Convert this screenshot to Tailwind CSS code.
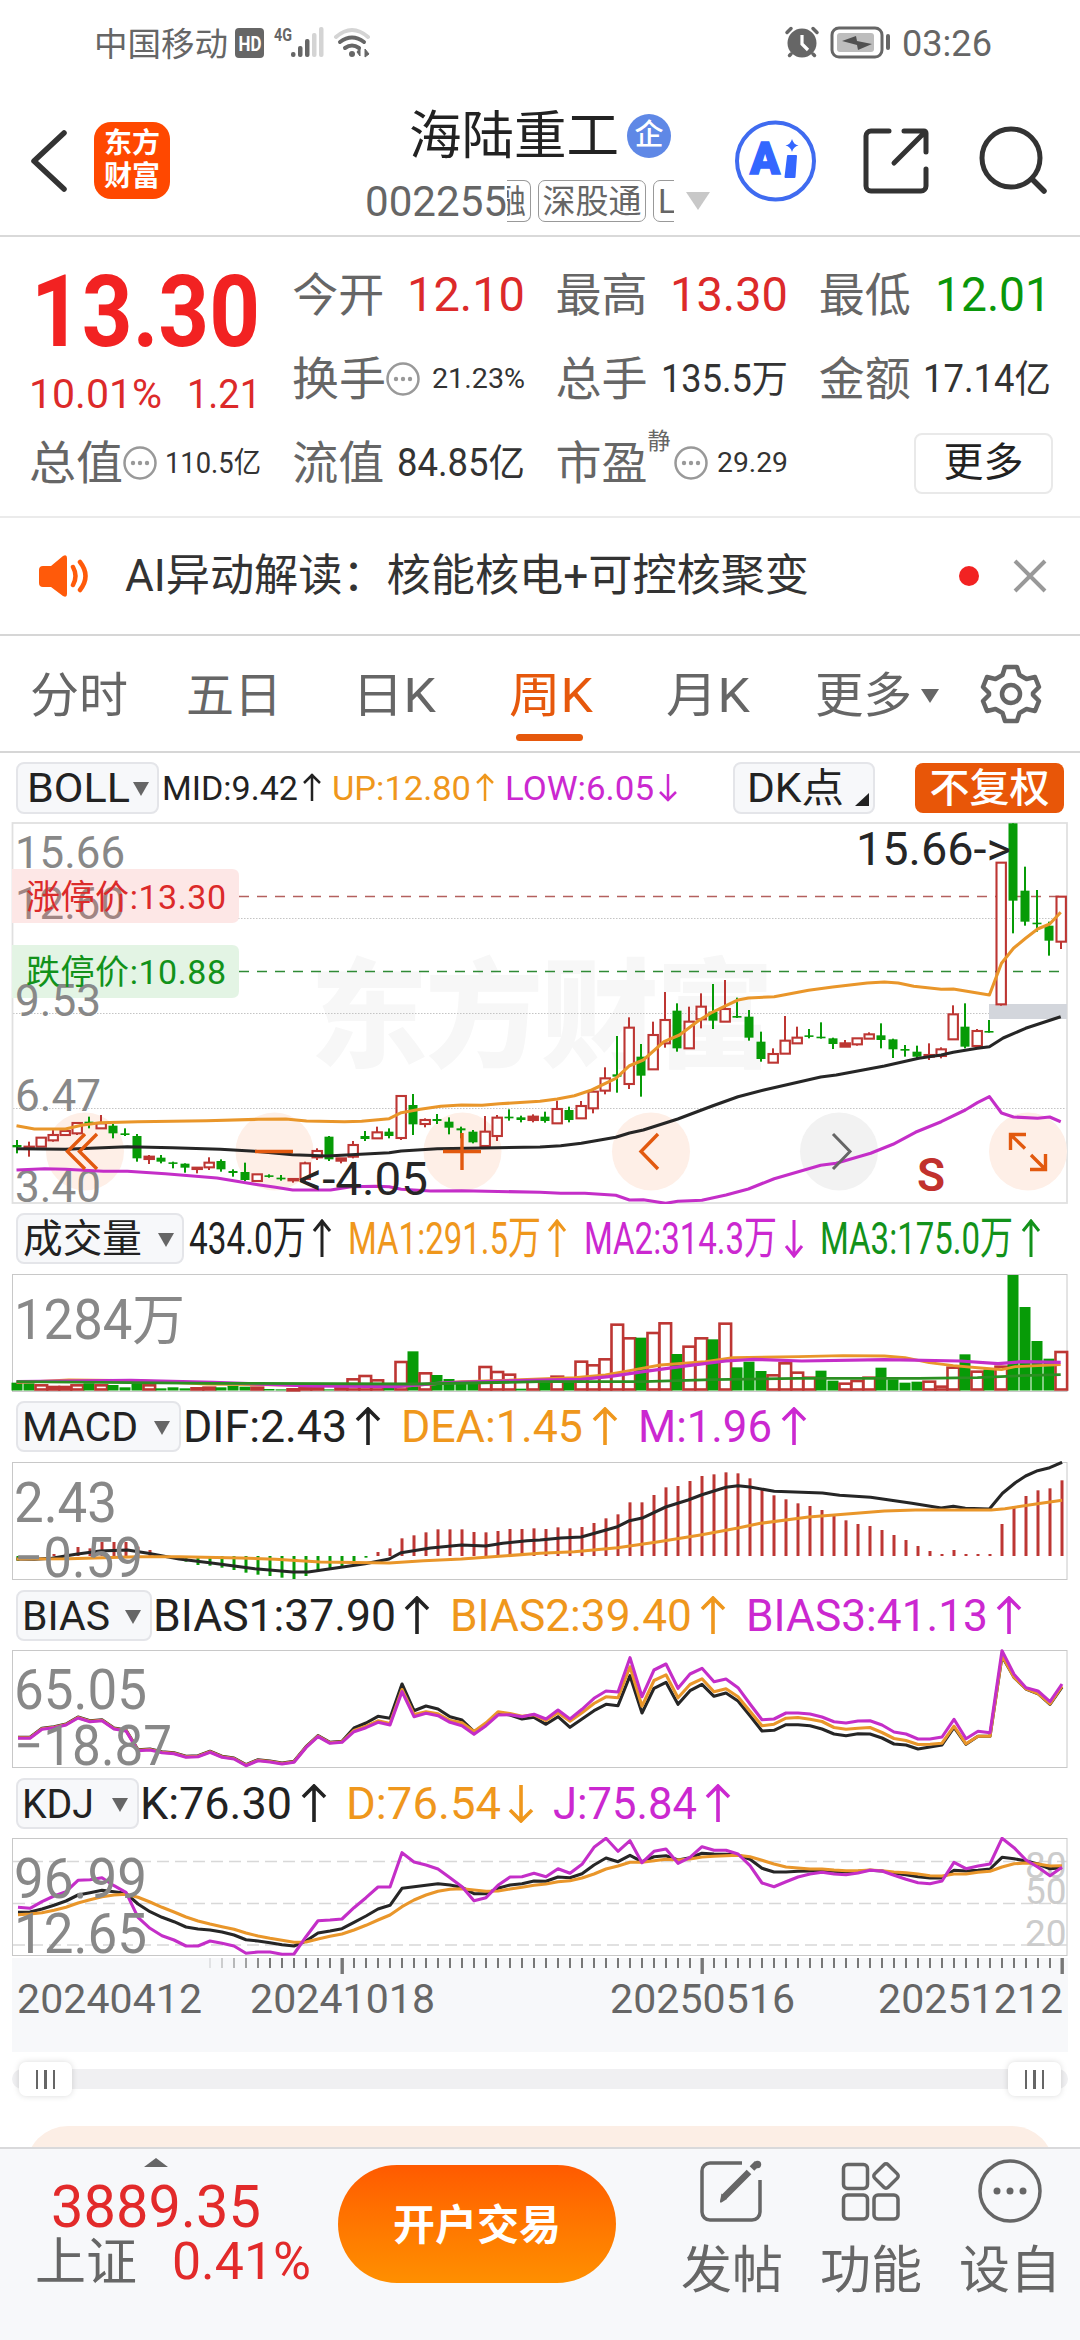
<!DOCTYPE html>
<html lang="zh-CN">
<head>
<meta charset="utf-8">
<title>海陆重工 002255</title>
<script src="https://cdn.jsdelivr.net/npm/@tailwindcss/browser@4"></script>
</head>
<body class="bg-white">
<div class="flex h-[2340px] w-[1080px] flex-col overflow-hidden bg-white font-[Roboto,'Noto_Sans_CJK_SC',sans-serif] leading-none whitespace-nowrap text-[#666]">

  <!-- status bar -->
  <div class="flex h-[88px] shrink-0 items-center pl-[94px] pr-[88px]">
    <span class="fit w-[134px] text-[33px]">中国移动</span>
    <svg class="ml-[6px]" width="140" height="36" viewBox="234 26 140 36">
      <rect x="235" y="28" width="29" height="30" rx="4" fill="#666"/>
      <text x="238.500" y="51" font-size="21" font-weight="700" fill="#fff" textLength="23" lengthAdjust="spacingAndGlyphs">HD</text>
      <text x="274" y="41" font-size="18" font-weight="700" fill="#666" textLength="18" lengthAdjust="spacingAndGlyphs">4G</text>
      <g fill="#666"><rect x="291" y="52" width="4.500" height="5" rx="2"/><rect x="298" y="46" width="4.500" height="11" rx="2"/><rect x="305" y="39" width="4.500" height="18" rx="2"/></g>
      <g fill="#d4d4d4"><rect x="312" y="33" width="4.500" height="24" rx="2"/><rect x="319" y="27" width="4.500" height="30" rx="2"/></g>
      <g fill="none" stroke-width="4" stroke-linecap="round"><path d="M336 37q16-14 32 0" stroke="#d4d4d4"/><path d="M340 42q12-9 24 0M345 48q7-5 14 0" stroke="#666"/></g>
      <circle cx="352" cy="54" r="3" fill="#666"/>
      <path d="M360 48v8l-3-4zM365 57v-8l4 5z" fill="#666" stroke="#666"/>
    </svg>
    <svg class="ml-auto" width="108" height="36" viewBox="784 26 108 36">
      <circle cx="802" cy="43" r="14.500" fill="#666"/>
      <path d="M787 32.500l4-4M817 32.500l-4-4M791 54l-1.500 1.500M813 54l1.500 1.500" stroke="#666" stroke-width="3.500" stroke-linecap="round"/>
      <path d="M802 35v9l6 6" stroke="#fff" stroke-width="3.200" fill="none"/>
      <rect x="832" y="28" width="50" height="29" rx="7" fill="none" stroke="#666" stroke-width="3"/>
      <rect x="837" y="33" width="37" height="19" rx="3" fill="#bdbdbd"/>
      <path d="M856 36l1 5 15 3-14 6-1-5-15-4z" fill="#505050"/>
      <rect x="886" y="34" width="4" height="16" rx="2" fill="#666"/>
    </svg>
    <span class="fit ml-[10px] w-[90px] text-[36px]">03:26</span>
  </div>

  <!-- title bar -->
  <div class="flex h-[149px] shrink-0 border-b-2 border-[#d9d9d9] pl-[28px]">
    <svg class="mt-[41px]" width="42" height="64" viewBox="28 129 42 64"><path d="M64 133L34 161l30 28" fill="none" stroke="#333" stroke-width="5.500" stroke-linecap="round" stroke-linejoin="round"/></svg>
    <div class="mt-[34px] ml-[24px] flex h-[77px] w-[76px] flex-col items-center justify-center gap-[5px] rounded-[17px] bg-[#ff4800] text-[28px] font-bold text-white">
      <span>东方</span><span>财富</span>
    </div>
    <div class="ml-[195px] flex w-[350px] flex-col">
      <div class="mt-[23px] ml-[44px] flex items-center">
        <span class="fit w-[210px] text-[52px] text-[#222]">海陆重工</span>
        <span class="-mt-[3px] ml-[8px] flex size-[44px] items-center justify-center rounded-full bg-[#5f88e6] text-[29px] font-medium text-white">企</span>
      </div>
      <div class="mt-[17px] flex h-[42px] items-center">
        <span class="fit w-[142px] text-[43px]">002255</span>
        <div class="flex h-[42px] w-[167px] gap-[7px] overflow-hidden text-[33px]">
          <span class="flex w-[24px] shrink-0 items-center justify-end rounded-r-[7px] border border-l-0 border-[#999] pr-[4px]">融</span>
          <span class="flex w-[108px] shrink-0 items-center justify-center rounded-[7px] border border-[#999]">深股通</span>
          <span class="flex w-[60px] shrink-0 items-center rounded-[7px] border border-[#999] pl-[4px]">L</span>
        </div>
        <svg class="ml-[12px]" width="24" height="18"><path d="M0 0h24l-12 18z" fill="#c8c8c8"/></svg>
      </div>
    </div>
    <svg class="mt-[30px] ml-[18px]" width="314" height="86" viewBox="733 118 314 86">
      <circle cx="775.500" cy="161" r="38.500" fill="none" stroke="#3f6bf0" stroke-width="4"/>
      <text x="750" y="174" font-size="44" font-weight="900" fill="#3366ff" stroke="#3366ff" stroke-width="1.500" textLength="30" lengthAdjust="spacingAndGlyphs">A</text>
      <path d="M788 156h8l-1.500 21h-9z" fill="#3366ff" stroke="#3366ff" stroke-width="2" stroke-linejoin="round"/><path d="M792 139q1.500 5.500 6.500 6.500-5 1-6.500 6.500-1.500-5.500-6.500-6.500 5-1 6.500-6.500z" fill="#3366ff"/>
      <path d="M889 131h-18a5 5 0 0 0-5 5v50a5 5 0 0 0 5 5h50a5 5 0 0 0 5-5v-17M904 131h20a2 2 0 0 1 2 2v19M924 133L894 163" fill="none" stroke="#333" stroke-width="5" stroke-linecap="round"/>
      <circle cx="1011" cy="158" r="29" fill="none" stroke="#333" stroke-width="5"/><path d="M1032 179l12 12" stroke="#333" stroke-width="5.500" stroke-linecap="round"/>
    </svg>
  </div>

  <!-- quote -->
  <div class="grid h-[281px] shrink-0 grid-cols-4 grid-rows-[84px_84px_84px] gap-x-[31px] border-b-2 border-[#ebebeb] px-[29px] pt-[16px] text-[46px]">
    <div class="row-span-2 flex flex-col text-[#dc2a2a]">
      <span class="fit mt-[9px] ml-[2px] w-[229px] text-[100px] font-bold text-[#f22222]">13.30</span>
      <div class="mt-[12px] flex justify-between text-[41px]"><span class="fit w-[133px]">10.01%</span><span class="fit w-[74px]">1.21</span></div>
    </div>
    <div class="flex items-center justify-between"><span class="fit w-[92px]">今开</span><span class="fit w-[118px] text-[48px] text-[#dc2a2a]">12.10</span></div>
    <div class="flex items-center justify-between"><span class="fit w-[92px]">最高</span><span class="fit w-[118px] text-[48px] text-[#dc2a2a]">13.30</span></div>
    <div class="flex items-center justify-between"><span class="fit w-[92px]">最低</span><span class="fit w-[116px] text-[48px] text-[#0a970a]">12.01</span></div>
    <div class="flex items-center"><span class="fit w-[94px]">换手</span><svg width="34" height="34"><use href="#more"/></svg><span class="fit ml-auto w-[93px] text-[28px] text-[#333]">21.23%</span></div>
    <div class="flex items-center justify-between"><span class="fit w-[92px]">总手</span><span class="fit w-[127px] text-[38px] text-[#333]">135.5万</span></div>
    <div class="flex items-center justify-between"><span class="fit w-[92px]">金额</span><span class="fit w-[128px] text-[38px] text-[#333]">17.14亿</span></div>
    <div class="flex items-center"><span class="fit w-[94px]">总值</span><svg width="34" height="34"><use href="#more"/></svg><span class="fit ml-auto w-[96px] text-[29px] text-[#333]">110.5亿</span></div>
    <div class="flex items-center justify-between"><span class="fit w-[92px]">流值</span><span class="fit w-[128px] text-[38px] text-[#333]">84.85亿</span></div>
    <div class="flex items-center"><span class="fit w-[92px]">市盈</span><span class="-mt-[44px] text-[23px]">静</span><svg class="ml-[3px]" width="34" height="34"><use href="#more"/></svg><span class="fit ml-auto w-[71px] text-[28px] text-[#333]">29.29</span></div>
    <div class="-mr-[2px] flex items-center justify-end"><span class="flex h-[61px] w-[139px] items-center justify-center rounded-[8px] border-2 border-[#e9e9e9] text-[40px] text-[#222]">更多</span></div>
  </div>

  <!-- notice -->
  <div class="flex h-[118px] shrink-0 items-center border-b-2 border-[#d6d6d6] pl-[38px] pr-[32px]">
    <svg width="52" height="44" viewBox="38 554 52 44">
      <path d="M43 566h8l12-10q4-2 4 2v36q0 4-4 2l-12-9h-8q-4 0-4-4v-13q0-4 4-4z" fill="#ff5a0a"/>
      <path d="M73 567q5 9 0 18M80 562q11 14 0 28" fill="none" stroke="#ff5a0a" stroke-width="4.500" stroke-linecap="round"/>
    </svg>
    <span class="fit ml-[35px] w-[684px] text-[44px] text-[#333]">AI异动解读：核能核电+可控核聚变</span>
    <i class="ml-auto size-[20px] rounded-full bg-[#f22222]"></i>
    <svg class="ml-[33px]" width="36" height="36"><path d="M3 3l30 30M33 3L3 33" stroke="#999" stroke-width="4"/></svg>
  </div>

  <!-- period tabs -->
  <div class="flex h-[117px] shrink-0 items-center border-b-2 border-[#d6d6d6] pt-[4px] pl-[30px] text-[48px]">
    <span class="fit w-[98px]">分时</span>
    <span class="fit ml-[58px] w-[96px]">五日</span>
    <span class="fit ml-[70px] w-[84px]">日K</span>
    <span class="relative ml-[73px] text-[#e6580c]"><span class="fit w-[84px]">周K</span><i class="absolute top-[62px] left-[7px] h-[7px] w-[67px] rounded-full bg-[#e6580c]"></i></span>
    <span class="fit ml-[73px] w-[84px]">月K</span>
    <span class="fit ml-[65px] w-[97px]">更多</span>
    <svg class="ml-[9px]" width="18" height="14"><path d="M0 0h18l-9 14z" fill="#666"/></svg>
    <svg class="-mt-[4px] ml-[41px]" width="62" height="62" viewBox="-31 -31 62 62" fill="none" stroke="#666" stroke-width="4.500" stroke-linejoin="round">
      <path d="M-6-27h12l2.500 8 7 4 8.500-2 4 10-6 6v2l6 6-4 10-8.500-2-7 4-2.500 8h-12l-2.500-8-7-4-8.500 2-4-10 6-6v-2l-6-6 4-10 8.500 2 7-4z"/><circle r="9"/>
    </svg>
  </div>

  <!-- BOLL legend -->
  <div class="flex h-[69px] shrink-0 items-center pl-[16px] text-[34px] text-[#222]">
    <div class="flex h-[52px] w-[143px] items-center rounded-[8px] border-2 border-[#e4e5e9] bg-[#f7f8fa] pt-[2px] pl-[9px] text-[41px]"><span class="fit w-[103px]">BOLL</span><svg class="ml-[3px]" width="16" height="14"><path d="M0 0h16l-8 14z" fill="#666"/></svg></div>
    <span class="fit ml-[3px] w-[136px]">MID:9.42</span><svg class="ml-[4px]" width="20" height="30"><use href="#up"/></svg>
    <span class="fit ml-[10px] w-[139px] text-[#ef971c]">UP:12.80</span><svg class="ml-[4px] text-[#ef971c]" width="20" height="30"><use href="#up"/></svg>
    <span class="fit ml-[10px] w-[149px] text-[#cb28d0]">LOW:6.05</span><svg class="ml-[4px] text-[#cb28d0]" width="20" height="30"><use href="#down"/></svg>
    <div class="ml-auto flex h-[52px] w-[142px] items-center rounded-[8px] border-2 border-[#e4e5e9] bg-[#f7f8fa] pt-[2px] pl-[12px] text-[40px]"><span class="fit w-[97px]">DK点</span><svg class="mt-[22px] ml-[11px]" width="14" height="13"><path d="M14 0v13h-14z" fill="#222"/></svg></div>
    <div class="mr-[16px] ml-[40px] flex h-[50px] w-[149px] items-center justify-center rounded-[8px] bg-[#e85608] pt-[2px] text-[40px] font-medium text-white">不复权</div>
  </div>

  <!-- candles -->
  <svg id="kline" class="shrink-0" width="1080" height="382" viewBox="0 822 1080 382">
    <text x="310" y="1058" font-size="118" font-weight="900" fill="#f7f7f7" textLength="464">东方财富</text>
    <g stroke="#c4c4c4" stroke-width="1.200" stroke-dasharray="1.500 1.500"><path d="M13 918.500H1067M13 1013.500H1067M13 1108.500H1067"/></g>
    <rect x="12.500" y="823" width="1054.500" height="380" fill="none" stroke="#e0e0e0" stroke-width="1.800"/>
    <g fill="#feefe7"><circle cx="85" cy="1151.500" r="39"/><circle cx="274.500" cy="1151.500" r="39"/><circle cx="462.500" cy="1151.500" r="39"/><circle cx="651" cy="1151.500" r="39"/><circle cx="1028" cy="1151.500" r="39"/></g>
    <circle cx="839" cy="1151.500" r="39" fill="#f2f2f2"/>
    <rect x="989" y="1004" width="78" height="15" fill="#d3d6dc"/>
    <path d="M12 869h220q7 0 7 7v40q0 7-7 7H12z" fill="#fde7e6"/>
    <path d="M12 945h220q7 0 7 7v39q0 7-7 7H12z" fill="#e3f4e4"/>
    <path d="M239 896.500H1067" stroke="#b4605e" stroke-width="1.400" stroke-dasharray="10 8"/>
    <path d="M239 971.500H1067" stroke="#2f8a35" stroke-width="1.400" stroke-dasharray="10 8"/>
    <g font-size="45" fill="#888">
      <text x="15" y="868" textLength="110" lengthAdjust="spacingAndGlyphs">15.66</text><text x="15" y="919" textLength="110" lengthAdjust="spacingAndGlyphs" fill="#a08583">12.60</text>
      <text x="15" y="1015.500" textLength="86" lengthAdjust="spacingAndGlyphs">9.53</text><text x="15" y="1110.500" textLength="86" lengthAdjust="spacingAndGlyphs">6.47</text><text x="15" y="1201.500" textLength="86" lengthAdjust="spacingAndGlyphs">3.40</text>
    </g>
    <text x="26" y="909" font-size="34" fill="#dc2a2a" textLength="200">涨停价:13.30</text>
    <text x="26" y="984" font-size="34" fill="#12921a" textLength="200">跌停价:10.88</text>
  </svg>

  <!-- volume legend -->
  <div class="flex h-[69px] shrink-0 items-center pl-[16px] text-[45px] text-[#222]">
    <div class="flex h-[51px] w-[168px] items-center rounded-[8px] border-2 border-[#e4e5e9] bg-[#f7f8fa] pt-[2px] pl-[5px] text-[39px]"><span class="fit w-[119px]">成交量</span><svg class="ml-[16px]" width="16" height="14"><path d="M0 0h16l-8 14z" fill="#666"/></svg></div>
    <span class="fit ml-[5px] w-[117px]">434.0万</span><svg class="ml-[6px]" width="20" height="39" viewBox="0 0 20 39"><use href="#tallup"/></svg>
    <span class="fit ml-[16px] w-[193px] text-[#ef971c]">MA1:291.5万</span><svg class="ml-[6px] text-[#ef971c]" width="20" height="39"><use href="#tallup"/></svg>
    <span class="fit ml-[17px] w-[193px] text-[#cb28d0]">MA2:314.3万</span><svg class="ml-[7px] text-[#cb28d0]" width="20" height="39"><use href="#talldown"/></svg>
    <span class="fit ml-[16px] w-[193px] text-[#12921a]">MA3:175.0万</span><svg class="ml-[8px] text-[#12921a]" width="20" height="39"><use href="#tallup"/></svg>
  </div>
  <svg id="volume" class="shrink-0" width="1080" height="119" viewBox="0 1273 1080 119">
    <rect x="12.500" y="1274.500" width="1054.500" height="117" fill="none" stroke="#c8c8c8"/>
    <text x="14" y="1339" font-size="55" fill="#888" textLength="171" lengthAdjust="spacingAndGlyphs">1284万</text>
  </svg>

  <!-- MACD -->
  <div class="flex h-[69px] shrink-0 items-center pl-[16px] text-[45px] text-[#222]">
    <div class="flex h-[51px] w-[165px] items-center rounded-[8px] border-2 border-[#e4e5e9] bg-[#f7f8fa] pt-[2px] pl-[4px] text-[41px]"><span class="fit w-[116px]">MACD</span><svg class="ml-[16px]" width="16" height="14"><path d="M0 0h16l-8 14z" fill="#666"/></svg></div>
    <span class="fit ml-[2px] w-[164px]">DIF:2.43</span><svg class="ml-[8px]" width="26" height="39"><use href="#bigup"/></svg>
    <span class="fit ml-[20px] w-[182px] text-[#ef971c]">DEA:1.45</span><svg class="ml-[9px] text-[#ef971c]" width="26" height="39"><use href="#bigup"/></svg>
    <span class="fit ml-[20px] w-[134px] text-[#cb28d0]">M:1.96</span><svg class="ml-[9px] text-[#cb28d0]" width="26" height="39"><use href="#bigup"/></svg>
  </div>
  <svg id="macd" class="shrink-0" width="1080" height="119" viewBox="0 1461 1080 119">
    <rect x="12.500" y="1462.500" width="1054.500" height="117" fill="none" stroke="#c8c8c8"/>
  </svg>

  <!-- BIAS -->
  <div class="flex h-[69px] shrink-0 items-center pt-[2px] pl-[16px] text-[45px] text-[#222]">
    <div class="flex h-[51px] w-[136px] items-center rounded-[8px] border-2 border-[#e4e5e9] bg-[#f7f8fa] pt-[2px] pl-[4px] text-[41px]"><span class="fit w-[88px]">BIAS</span><svg class="ml-[15px]" width="16" height="14"><path d="M0 0h16l-8 14z" fill="#666"/></svg></div>
    <span class="fit ml-[1px] w-[243px]">BIAS1:37.90</span><svg class="ml-[8px]" width="26" height="39"><use href="#bigup"/></svg>
    <span class="fit ml-[20px] w-[242px] text-[#ef971c]">BIAS2:39.40</span><svg class="ml-[8px] text-[#ef971c]" width="26" height="39"><use href="#bigup"/></svg>
    <span class="fit ml-[20px] w-[242px] text-[#cb28d0]">BIAS3:41.13</span><svg class="ml-[8px] text-[#cb28d0]" width="26" height="39"><use href="#bigup"/></svg>
  </div>
  <svg id="bias" class="shrink-0" width="1080" height="119" viewBox="0 1649 1080 119">
    <rect x="12.500" y="1650.500" width="1054.500" height="117" fill="none" stroke="#c8c8c8"/>
  </svg>

  <!-- KDJ -->
  <div class="flex h-[69px] shrink-0 items-center pt-[2px] pl-[16px] text-[45px] text-[#222]">
    <div class="flex h-[51px] w-[123px] items-center rounded-[8px] border-2 border-[#e4e5e9] bg-[#f7f8fa] pt-[2px] pl-[4px] text-[41px]"><span class="fit w-[72px]">KDJ</span><svg class="ml-[18px]" width="16" height="14"><path d="M0 0h16l-8 14z" fill="#666"/></svg></div>
    <span class="fit ml-[1px] w-[152px]">K:76.30</span><svg class="ml-[9px]" width="26" height="39"><use href="#bigup"/></svg>
    <span class="fit ml-[19px] w-[155px] text-[#ef971c]">D:76.54</span><svg class="ml-[7px] text-[#ef971c]" width="26" height="39"><use href="#bigdown"/></svg>
    <span class="fit ml-[19px] w-[144px] text-[#cb28d0]">J:75.84</span><svg class="ml-[8px] text-[#cb28d0]" width="26" height="39"><use href="#bigup"/></svg>
  </div>
  <svg id="kdj" class="shrink-0" width="1080" height="119" viewBox="0 1837 1080 119">
    <rect x="12.500" y="1838.500" width="1054.500" height="117" fill="none" stroke="#c8c8c8"/>
    <path d="M13 1861.500H1067M13 1903.500H1067M13 1945H1067" stroke="#d8d8d8" stroke-width="1.300" stroke-dasharray="12 6"/>
    <g font-size="37" fill="#ccc"><text x="1025" y="1878">80</text><text x="1025" y="1904">50</text><text x="1025" y="1946">20</text></g>
  </svg>

  <!-- time axis -->
  <svg id="axis" class="shrink-0" width="1080" height="97" viewBox="0 1956 1080 97">
    <rect x="12" y="1958" width="1056" height="94" fill="#f7f8fa"/>
    <g font-size="41" fill="#666"><text x="17" y="2013" textLength="185">20240412</text><text x="250" y="2013" textLength="185">20241018</text><text x="610" y="2013" textLength="185">20250516</text><text x="878" y="2013" textLength="185">20251212</text></g>
  </svg>

  <!-- range slider -->
  <div class="flex h-[73px] shrink-0 px-[12px] pt-[16px]">
    <div class="flex h-[20px] w-full items-center justify-between rounded-full bg-[#f0f0f2] px-[7px]">
      <span class="flex h-[34px] w-[53px] items-center justify-center gap-[6px] rounded-[7px] bg-white shadow-[0_0_6px_rgba(0,0,0,0.15)]"><i class="h-[19px] w-[2.5px] bg-[#666]"></i><i class="h-[19px] w-[2.5px] bg-[#666]"></i><i class="h-[19px] w-[2.5px] bg-[#666]"></i></span>
      <span class="flex h-[34px] w-[53px] items-center justify-center gap-[6px] rounded-[7px] bg-white shadow-[0_0_6px_rgba(0,0,0,0.15)]"><i class="h-[19px] w-[2.5px] bg-[#666]"></i><i class="h-[19px] w-[2.5px] bg-[#666]"></i><i class="h-[19px] w-[2.5px] bg-[#666]"></i></span>
    </div>
  </div>
  <div class="flex h-[21px] shrink-0 overflow-hidden px-[26px]"><div class="h-[100px] w-full rounded-[42px] bg-[#fceee5]"></div></div>

  <!-- bottom bar -->
  <div class="flex h-[193px] shrink-0 border-t-2 border-[#d9d9db] bg-[#f7f8fa]">
    <div class="flex w-[338px] flex-col text-[#e22a2a]">
      <svg class="mt-[9px] ml-[144px]" width="24" height="9"><path d="M0 9h24l-12-9z" fill="#666"/></svg>
      <span class="fit mt-[10px] ml-[51px] w-[210px] text-[59px]">3889.35</span>
      <div class="mt-[-1px] flex items-center pl-[35px] text-[52px]"><span class="fit mt-[2px] w-[102px] text-[51px] text-[#666]">上证</span><span class="fit ml-[35px] w-[139px]">0.41%</span></div>
    </div>
    <div class="mt-[16px] flex h-[118px] w-[278px] items-center justify-center rounded-full bg-linear-to-b from-[#ff5a00] to-[#ff8f00] pt-[4px] text-[42px] font-bold text-white"><span class="fit w-[168px]">开户交易</span></div>
    <div class="ml-[64px] flex w-[382px] justify-between text-[51px]">
      <div class="flex w-[104px] flex-col items-center"><svg class="mt-[10px]" width="64" height="64" viewBox="701 2159 64 64"><path d="M743 2163h-32a8 8 0 0 0-8 8v41a8 8 0 0 0 8 8h42a8 8 0 0 0 8-8v-32" fill="none" stroke="#666" stroke-width="3.500"/><path d="M753 2168.500l5-5M725 2197l25-25" stroke="#666" stroke-width="6.500"/><circle cx="758.500" cy="2164.500" r="3.700" fill="#666"/><path d="M722.500 2193.500l5.500 5.500-5.500 3.500h-1.500v-1.500z" fill="#666"/></svg><span class="mt-[22px]">发帖</span></div>
      <div class="flex w-[104px] flex-col items-center"><svg class="mt-[10px]" width="64" height="64" viewBox="840 2159 64 64" fill="none" stroke="#666" stroke-width="3.500" stroke-linejoin="round"><rect x="844.500" y="2164.500" width="24" height="24" rx="4"/><rect x="844.500" y="2195" width="24" height="24" rx="4"/><rect x="875" y="2195" width="24" height="24" rx="4"/><rect x="877.500" y="2166.500" width="19" height="19" rx="3" transform="rotate(45 887 2176)"/></svg><span class="mt-[22px]">功能</span></div>
      <div class="flex w-[104px] flex-col items-center"><svg class="mt-[10px]" width="64" height="64"><circle cx="32" cy="32" r="30" fill="none" stroke="#666" stroke-width="3.500"/><g fill="#666"><circle cx="19" cy="32" r="3.500"/><circle cx="32" cy="32" r="3.500"/><circle cx="45" cy="32" r="3.500"/></g></svg><span class="mt-[22px]">设自</span></div>
    </div>
  </div>
</div>

<svg class="absolute size-0">
  <defs>
    <g id="more"><circle cx="17" cy="17" r="15.500" fill="none" stroke="#999" stroke-width="2.500"/><g fill="#999"><circle cx="10" cy="17" r="2.200"/><circle cx="17" cy="17" r="2.200"/><circle cx="24" cy="17" r="2.200"/></g></g>
    <path id="up" d="M10 1v27M2 10l8-8 8 8" fill="none" stroke="currentColor" stroke-width="2.500"/>
    <path id="down" d="M10 1v27M2 19l8 8 8-8" fill="none" stroke="currentColor" stroke-width="2.500"/>
    <path id="tallup" d="M10 1v37M2 12l8-10 8 10" fill="none" stroke="currentColor" stroke-width="3"/>
    <path id="talldown" d="M10 1v37M2 27l8 10 8-10" fill="none" stroke="currentColor" stroke-width="3"/>
    <path id="bigup" d="M13 1v37M2 13l11-11 11 11" fill="none" stroke="currentColor" stroke-width="3.600"/>
    <path id="bigdown" d="M13 1v37M2 26l11 11 11-11" fill="none" stroke="currentColor" stroke-width="3.600"/>
  </defs>
</svg>

<script>
// Squeeze each label into the width that its column gives it
function fit(el) {
  el.style.transform = 'none';
  const r = document.createRange();
  r.selectNodeContents(el);
  const natural = r.getBoundingClientRect().width;
  if (natural) el.style.transform = `scaleX(${el.offsetWidth / natural})`;
}
const labels = [...document.querySelectorAll('.fit')];
const watcher = new ResizeObserver(list => list.forEach(e => fit(e.target)));
labels.forEach(el => {
  el.style.display = 'inline-block';
  el.style.flexShrink = 0;
  el.style.transformOrigin = 'left center';
  watcher.observe(el);
});
window.addEventListener('load', () => labels.forEach(fit));

const GREEN = '#079b07', RED = '#bd3633', DARK = '#262626', ORANGE = '#e9962a', PURPLE = '#c42ec8';
const UX = 2.9037, UY = 3, H = 1568;
const NS = 'http://www.w3.org/2000/svg';
function add(id, tag, attrs, text) {
  const e = document.createElementNS(NS, tag);
  for (const k in attrs) e.setAttribute(k, attrs[k]);
  if (text) e.textContent = text;
  document.getElementById(id).appendChild(e);
}
const nums = s => s.trim().split(/[\s,]+/).map(Number);
const cx = i => 17 + 12 * i;
// left and right halves hold x,y pairs
function curve(id, y0, color, left, right, w = 3.1) {
  const pts = [];
  [nums(left), nums(right)].forEach((a, h) => {
    for (let i = 0; i < a.length; i += 2) pts.push(((a[i] + h * H) / UX).toFixed(1) + ',' + (y0 + a[i + 1] / UY).toFixed(1));
  });
  add(id, 'polyline', { points: pts.join(' '), fill: 'none', stroke: color, 'stroke-width': w, 'stroke-linejoin': 'round' });
}
// one value for each week
function series(id, y0, color, vals, w = 3.1) {
  add(id, 'polyline', { points: nums(vals).map((v, i) => (cx(i) + 1) + ',' + (y0 + v / UY).toFixed(1)).join(' '), fill: 'none', stroke: color, 'stroke-width': w, 'stroke-linejoin': 'round' });
}

// weekly candles: colour high bodyTop bodyBottom low
const candles = `g990,1005,1012,1030 r995,1010,1014,1040 r980,983,1010,1012 r955,975,991,995 r955,963,975,978 r937,939,970,975 g920,935,942,955 r915,940,955,957 g942,947,970,985 g955,970,975,978 g972,978,1045,1055 r1035,1040,1047,1062 g1035,1043,1055,1060 g1055,1057,1061,1075 g1060,1061,1073,1088 r1072,1073,1077,1090 r1042,1058,1072,1080 g1048,1053,1078,1085 g1078,1083,1089,1100 g1058,1086,1110,1113 r1090,1093,1113,1115 g1093,1096,1100,1103 g1095,1103,1108,1112 r1105,1107,1111,1118 r1055,1060,1107,1115 r1015,1023,1042,1050 g978,980,1048,1053 r1042,1045,1052,1060 r993,1005,1040,1045 g963,978,987,993 r950,967,985,988 g955,965,978,985 r855,858,984,990 g852,885,943,975 r925,930,942,952 g912,927,933,942 g922,935,953,973 g950,955,961,985 g960,965,997,1000 r918,965,1008,1012 r915,923,978,993 g898,920,925,932 g917,922,930,937 r913,920,930,937 g905,920,933,938 r872,897,940,943 g890,900,930,937 r873,888,925,928 r835,845,895,910 r772,805,842,853 g678,793,800,848 r622,653,822,837 g702,740,797,860 r635,675,778,780 r546,630,700,713 g580,602,715,725 r590,635,715,717 r550,590,628,655 g522,605,632,657 r510,597,635,637 g563,618,623,624 g600,620,683,692 g665,695,747,755 r715,732,758,760 r618,692,731,733 r650,683,700,702 g657,676,680,685 g637,680,684,686 g683,685,702,717 r690,700,710,713 r682,685,703,707 r667,673,686,688 g640,676,690,715 g686,688,718,744 g705,717,722,740 g707,725,740,745 r700,735,740,750 r712,718,738,745 r586,613,688,690 g580,650,710,715 r657,663,708,712 g630,663,666,668 r155,158,583,587 g40,40,272,370 g170,242,335,347 g240,338,342,365 g335,347,392,437 r258,260,395,417`.split(' ');
candles.forEach((c, i) => {
  const up = c[0] === 'r', [h, t, b, l] = nums(c.slice(1)).map(v => 810 + v / UY), x = cx(i), col = up ? RED : GREEN;
  if (up) {
    if (t - h > 1) add('kline', 'rect', { x: x - 1, y: h, width: 2, height: t - h, fill: col });
    if (l - b > 1) add('kline', 'rect', { x: x - 1, y: b, width: 2, height: l - b, fill: col });
    add('kline', 'rect', { x: x - 4.5, y: t, width: 9.4, height: Math.max(b - t, 1), fill: b - t > 3.5 ? '#fff' : col, stroke: col, 'stroke-width': 2.1 });
  } else {
    add('kline', 'rect', { x: x - 1, y: h, width: 2, height: l - h, fill: col });
    add('kline', 'rect', { x: x - 4.5, y: t, width: 9, height: Math.max(b - t, 1.6), fill: col });
  }
});
curve('kline', 810, DARK, '48,1016 190,1018 370,1010 500,1013 640,1018 740,1024 850,1034 950,1038 1130,1028 1165,1023 1270,1016 1400,1014', '0,1011 60,1007 120,1000 220,982 260,969 300,960 400,927 500,888 575,860 650,840 815,801 860,795 1000,768 1100,745 1165,735 1200,727 1270,715 1305,710 1345,684 1410,655 1512,620');
curve('kline', 810, ORANGE, '48,947 100,957 190,957 240,945 290,938 400,935 600,932 750,928 830,927 890,933 1000,935 1050,934 1130,926 1165,908 1220,898 1280,889 1340,885 1400,886 1450,881', '0,874 50,867 100,857 150,840 220,805 260,767 300,750 360,695 405,675 460,632 500,607 540,587 575,570 605,564 680,560 780,541 850,531 950,519 1000,516 1040,519 1085,529 1165,538 1200,537 1305,555 1340,460 1375,415 1410,385 1445,357 1480,342 1512,307');
curve('kline', 810, PURPLE, '48,1080 130,1076 190,1078 300,1084 370,1084 480,1091 630,1104 740,1123 800,1132 850,1140 960,1140 1020,1130 1090,1129 1130,1130 1165,1138 1250,1143 1340,1142', '0,1147 60,1150 130,1150 220,1156 260,1170 300,1169 365,1180 400,1174 470,1171 540,1155 605,1137 680,1106 815,1066 860,1060 960,1030 1025,1003 1090,967 1165,935 1235,900 1270,878 1305,860 1340,909 1375,921 1445,925 1480,921 1512,935');
add('kline', 'text', { x: 298, y: 1195, 'font-size': 46, fill: '#262626', textLength: 130, lengthAdjust: 'spacingAndGlyphs' }, '<-4.05');
add('kline', 'text', { x: 856, y: 865, 'font-size': 46, fill: '#262626', textLength: 155, lengthAdjust: 'spacingAndGlyphs' }, '15.66->');
add('kline', 'text', { x: 917, y: 1191, 'font-size': 46, 'font-weight': 600, fill: '#c1312d' }, 'S');
const ic = d => add('kline', 'path', { d, fill: 'none', stroke: '#e2590f', 'stroke-width': 3.4 });
ic('M85 1134L67.500 1151.500 85 1169M97 1134L79.500 1151.500 97 1169');
ic('M255 1151.500H293');
ic('M443 1151.500H481M462 1133V1170');
ic('M658 1134L641 1151.500 658 1169');
ic('M1010.500 1150V1134.500H1026M1011 1135L1025 1148.500M1030 1169.500H1045.500V1154M1045 1169L1031 1155');
add('kline', 'path', { d: 'M833 1134L850 1151.500 833 1169', fill: 'none', stroke: '#666', 'stroke-width': 3 });

// weekly volume
const vol = 'g548 g550 r553 r558 r558 r553 g550 r553 g555 g562 g547 r553 g565 g562 g565 r562 r560 g562 g557 g560 r560 g567 g568 r565 r562 r562 g568 r562 r535 r525 r538 g560 r483 g454 r517 g525 g537 g545 g550 r498 r513 r521 g566 r540 g540 r527 g540 r482 r493 r475 r371 r412 g413 r396 r367 g462 r437 r412 g418 r368 g502 g485 g513 r523 r487 r515 r530 g512 g542 r548 r540 r530 g503 g538 g548 g545 r542 r557 r500 g463 r512 g508 r497 g225 g321 g423 g476 r453'.split(' ');
vol.forEach((v, i) => {
  const t = 1200 + v.slice(1) / UY, x = cx(i), b = 1390;
  if (v[0] === 'g') add('volume', 'rect', { x: x - 5.5, y: t, width: 11, height: b - t + .5, fill: GREEN });
  else add('volume', 'rect', { x: x - 5.5, y: t + 1, width: 11.6, height: Math.max(b - t - 1.5, 1), fill: '#fff', stroke: RED, 'stroke-width': 2.6 });
});
curve('volume', 1200, ORANGE, '48,548 200,540 400,542 600,552 900,556 1160,560 1340,545', '0,537 100,533 190,525 260,512 350,495 480,485 560,473 750,470 880,467 1000,468 1060,473 1130,488 1200,497 1280,504 1340,509 1380,500 1512,494', 2.8);
curve('volume', 1200, PURPLE, '48,545 380,541 620,547 900,558 1150,560 1300,548', '0,540 120,538 200,530 300,515 430,497 540,483 620,478 760,483 1000,479 1220,483 1330,491 1400,485 1512,487', 3.2);
curve('volume', 1200, '#2b8f22', '48,545 620,550 1200,552', '0,545 300,545 500,539 750,535 1100,535 1270,533 1400,527 1512,524', 2.8);

// MACD histogram around zero
nums('1082 1074 1068 1062 1060 1041 1045 1026 1026 1026 1040 1050 1066 1072 1085 1095 1097 1103 1110 1118 1124 1128 1133 1137 1128 1110 1106 1098 1085 1073 1056 1045 1015 1006 997 988 988 988 996 997 993 987 987 985 987 982 985 981 969 955 943 907 907 885 862 858 843 828 823 817 820 835 865 886 898 910 918 930 946 961 972 978 990 1005 1020 1038 1053 1062 1050 1062 1062 1062 972 918 888 871 865 841').forEach((v, i) => {
  const z = 1556, y = 1200 + v / UY;
  add('macd', 'rect', { x: cx(i) - .5, y: Math.min(y, z), width: 3, height: Math.abs(y - z), fill: v > 1068 ? GREEN : RED });
});
curve('macd', 1200, DARK, '48,1077 100,1078 150,1075 220,1063 290,1053 370,1050 430,1060 520,1077 620,1090 740,1106 850,1116 895,1116 960,1106 1060,1091 1130,1077 1165,1058 1250,1044 1340,1035 1410,1038 1460,1030 1530,1022', '0,1020 60,1014 120,1011 225,980 260,962 300,953 365,921 430,900 470,884 540,862 575,857 610,861 680,874 820,879 870,886 960,892 1080,910 1165,924 1200,919 1235,925 1305,927 1343,880 1380,848 1410,828 1445,812 1480,803 1516,787');
curve('macd', 1200, ORANGE, '48,1077 200,1076 400,1070 520,1070 700,1074 800,1078 930,1086 1130,1089 1230,1082 1340,1077 1460,1068', '0,1060 100,1055 225,1043 340,1026 470,1004 575,984 640,970 780,951 900,941 1000,933 1090,930 1310,930 1350,926 1440,912 1516,901');

// BIAS
const head = '475 475 448 443 435 414 425 422 447 453 512 510 518 521 532 530 517 532 537 557 542 546 552 547 503 470 490 487 ';
series('bias', 1579, DARK, head + '447 432 412 418 315 395 381 390 413 423 458 435 402 408 420 415 436 413 445 420 395 376 380 290 402 328 310 376 335 316 352 342 366 410 456 454 437 437 440 450 465 470 464 465 477 495 498 510 504 498 445 496 472 472 232 295 330 344 376 324');
series('bias', 1579.5, ORANGE, head + '453 440 424 432 330 405 397 403 423 430 456 430 397 402 410 406 423 400 425 400 372 352 355 262 380 303 286 355 315 298 337 328 352 395 439 434 416 414 419 426 444 449 446 444 459 477 483 495 494 491 440 493 470 470 228 293 328 342 373 320');
series('bias', 1580, PURPLE, head + '455 443 427 435 335 410 400 407 427 437 463 437 405 404 410 403 417 390 417 388 355 333 336 233 350 270 252 325 282 265 305 297 323 372 419 417 399 399 402 411 425 429 423 422 435 456 462 477 477 471 418 476 454 458 212 283 323 333 365 312');

// KDJ
series('kdj', 1580, DARK, '997 996 987 976 963 945 938 931 935 940 972 995 1012 1025 1041 1047 1050 1056 1065 1079 1083 1088 1094 1098 1083 1059 1053 1046 1027 1008 987 976 925 920 916 911 915 922 941 941 925 915 911 903 904 891 893 881 855 834 845 826 845 830 827 840 833 820 822 823 825 838 865 876 876 874 873 873 874 876 874 871 873 880 884 890 894 894 871 873 871 867 832 836 843 852 866 863');
series('kdj', 1580, ORANGE, '1004 1002 998 991 982 969 959 950 945 943 952 966 982 996 1011 1023 1032 1040 1048 1059 1068 1075 1081 1087 1086 1077 1069 1062 1050 1036 1020 1005 980 960 945 934 928 926 930 934 933 927 922 916 912 905 902 894 882 867 858 847 847 842 838 840 837 831 829 827 826 830 841 852 861 864 867 867 870 872 872 870 872 876 878 882 887 888 882 882 877 874 861 851 849 852 858 857');
series('kdj', 1580, PURPLE, '982 985 965 948 935 901 899 893 917 937 1012 1045 1067 1080 1098 1098 1083 1090 1098 1120 1116 1116 1123 1122 1070 1022 1020 1017 983 953 921 921 818 846 855 867 893 920 962 953 916 891 890 880 890 866 880 853 802 775 814 782 848 814 807 850 832 800 811 811 822 857 909 920 905 891 882 877 882 884 879 871 873 886 898 908 911 903 847 866 858 852 775 803 840 862 887 862');

// scale labels of the lower panes
[['macd', 14, 1522, 103, '2.43'], ['macd', 14, 1577, 129, '−0.59'], ['bias', 14, 1709, 133, '65.05'], ['bias', 14, 1765, 158, '−18.87'], ['kdj', 14, 1898, 133, '96.99'], ['kdj', 14, 1953, 133, '12.65']].forEach(([id, x, y, w, t]) =>
  add(id, 'text', { x, y, 'font-size': 55, fill: '#888', textLength: w, lengthAdjust: 'spacingAndGlyphs' }, t));

// weekly ticks, fading in at the left
for (let i = 16; i <= 87; i++) {
  const major = i === 27 || i === 57 || i === 87;
  add('axis', 'rect', { x: cx(i) + (major ? -.5 : 0), y: 1958, width: major ? 3.4 : 2, height: major ? 16 : 10, fill: '#777', opacity: Math.min(1, (i - 15) / 6) });
}
</script>
</body>
</html>
